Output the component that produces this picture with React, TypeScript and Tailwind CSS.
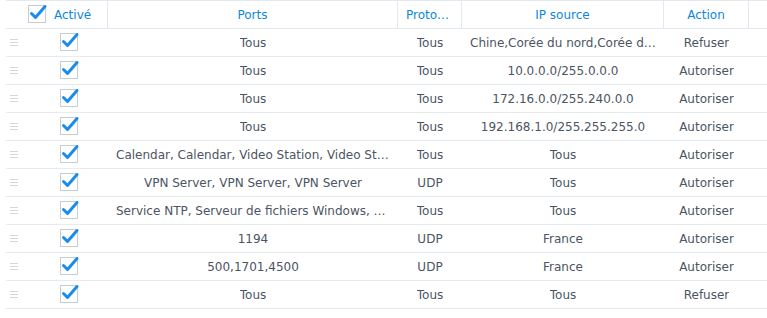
import React from "react";

type Rule = {
  ports: string;
  proto: string;
  ip: string;
  action: string;
};

const rules: Rule[] = [
  { ports: "Tous", proto: "Tous", ip: "Chine,Corée du nord,Corée du sud,Russie", action: "Refuser" },
  { ports: "Tous", proto: "Tous", ip: "10.0.0.0/255.0.0.0", action: "Autoriser" },
  { ports: "Tous", proto: "Tous", ip: "172.16.0.0/255.240.0.0", action: "Autoriser" },
  { ports: "Tous", proto: "Tous", ip: "192.168.1.0/255.255.255.0", action: "Autoriser" },
  { ports: "Calendar, Calendar, Video Station, Video Station, Photo Station", proto: "Tous", ip: "Tous", action: "Autoriser" },
  { ports: "VPN Server, VPN Server, VPN Server", proto: "UDP", ip: "Tous", action: "Autoriser" },
  { ports: "Service NTP, Serveur de fichiers Windows, Synology Drive", proto: "Tous", ip: "Tous", action: "Autoriser" },
  { ports: "1194", proto: "UDP", ip: "France", action: "Autoriser" },
  { ports: "500,1701,4500", proto: "UDP", ip: "France", action: "Autoriser" },
  { ports: "Tous", proto: "Tous", ip: "Tous", action: "Refuser" },
];

const Check = () => (
  <svg width="20" height="20" viewBox="0 0 20 20" className="block">
    <rect x="0.5" y="2.5" width="17" height="17" fill="#fff" stroke="#c5ced8" />
    <path d="M3.5 10.5 L7.5 14.5 L17 3.5" fill="none" stroke="#1b8ceb" strokeWidth="3" strokeLinecap="round" strokeLinejoin="round" />
  </svg>
);

const Handle = () => (
  <div className="flex flex-col gap-[2px] w-[8px]">
    <span className="h-px bg-[#d3d8de]" />
    <span className="h-px bg-[#d3d8de]" />
    <span className="h-px bg-[#d3d8de]" />
  </div>
);

const cols = "grid grid-cols-[102px_290px_64px_202px_85px_18px]";

export default function App() {
  return (
    <div className="w-[767px] h-[318px] bg-white font-['DejaVu_Sans',sans-serif] text-[12px] overflow-hidden">
      <div className="ml-[6px]">
        {/* Header */}
        <div className={`${cols} h-[29px] border-t border-b border-[#e4e9ef] text-[#0b87e3]`}>
          <div className="flex items-center pl-[22px] gap-[6px] border-r border-[#e4e9ef]">
            <div className="-mt-[3px]">
              <Check />
            </div>
            <span>Activé</span>
          </div>
          <div className="flex items-center justify-center border-r border-[#e4e9ef]">Ports</div>
          <div className="flex items-center px-2 border-r border-[#e4e9ef] min-w-0">
            <span className="truncate">Protocole</span>
          </div>
          <div className="flex items-center justify-center border-r border-[#e4e9ef]">IP source</div>
          <div className="flex items-center justify-center border-r border-[#e4e9ef]">Action</div>
          <div />
        </div>

        {/* Rows */}
        {rules.map((r, i) => (
          <div key={i} className={`${cols} h-[28px] border-b border-[#e6ebf0] text-[#4b5563]`}>
            <div className="flex items-center pl-[4px]">
              <Handle />
              <div className="ml-[42px] -mt-[3px]">
                <Check />
              </div>
            </div>
            <div className="flex items-center justify-center px-2 min-w-0">
              <span className="truncate">{r.ports}</span>
            </div>
            <div className="flex items-center justify-center px-2 min-w-0">
              <span className="truncate">{r.proto}</span>
            </div>
            <div className="flex items-center justify-center px-2 min-w-0">
              <span className="truncate">{r.ip}</span>
            </div>
            <div className="flex items-center justify-center px-2 min-w-0">
              <span className="truncate">{r.action}</span>
            </div>
            <div />
          </div>
        ))}
      </div>
    </div>
  );
}
